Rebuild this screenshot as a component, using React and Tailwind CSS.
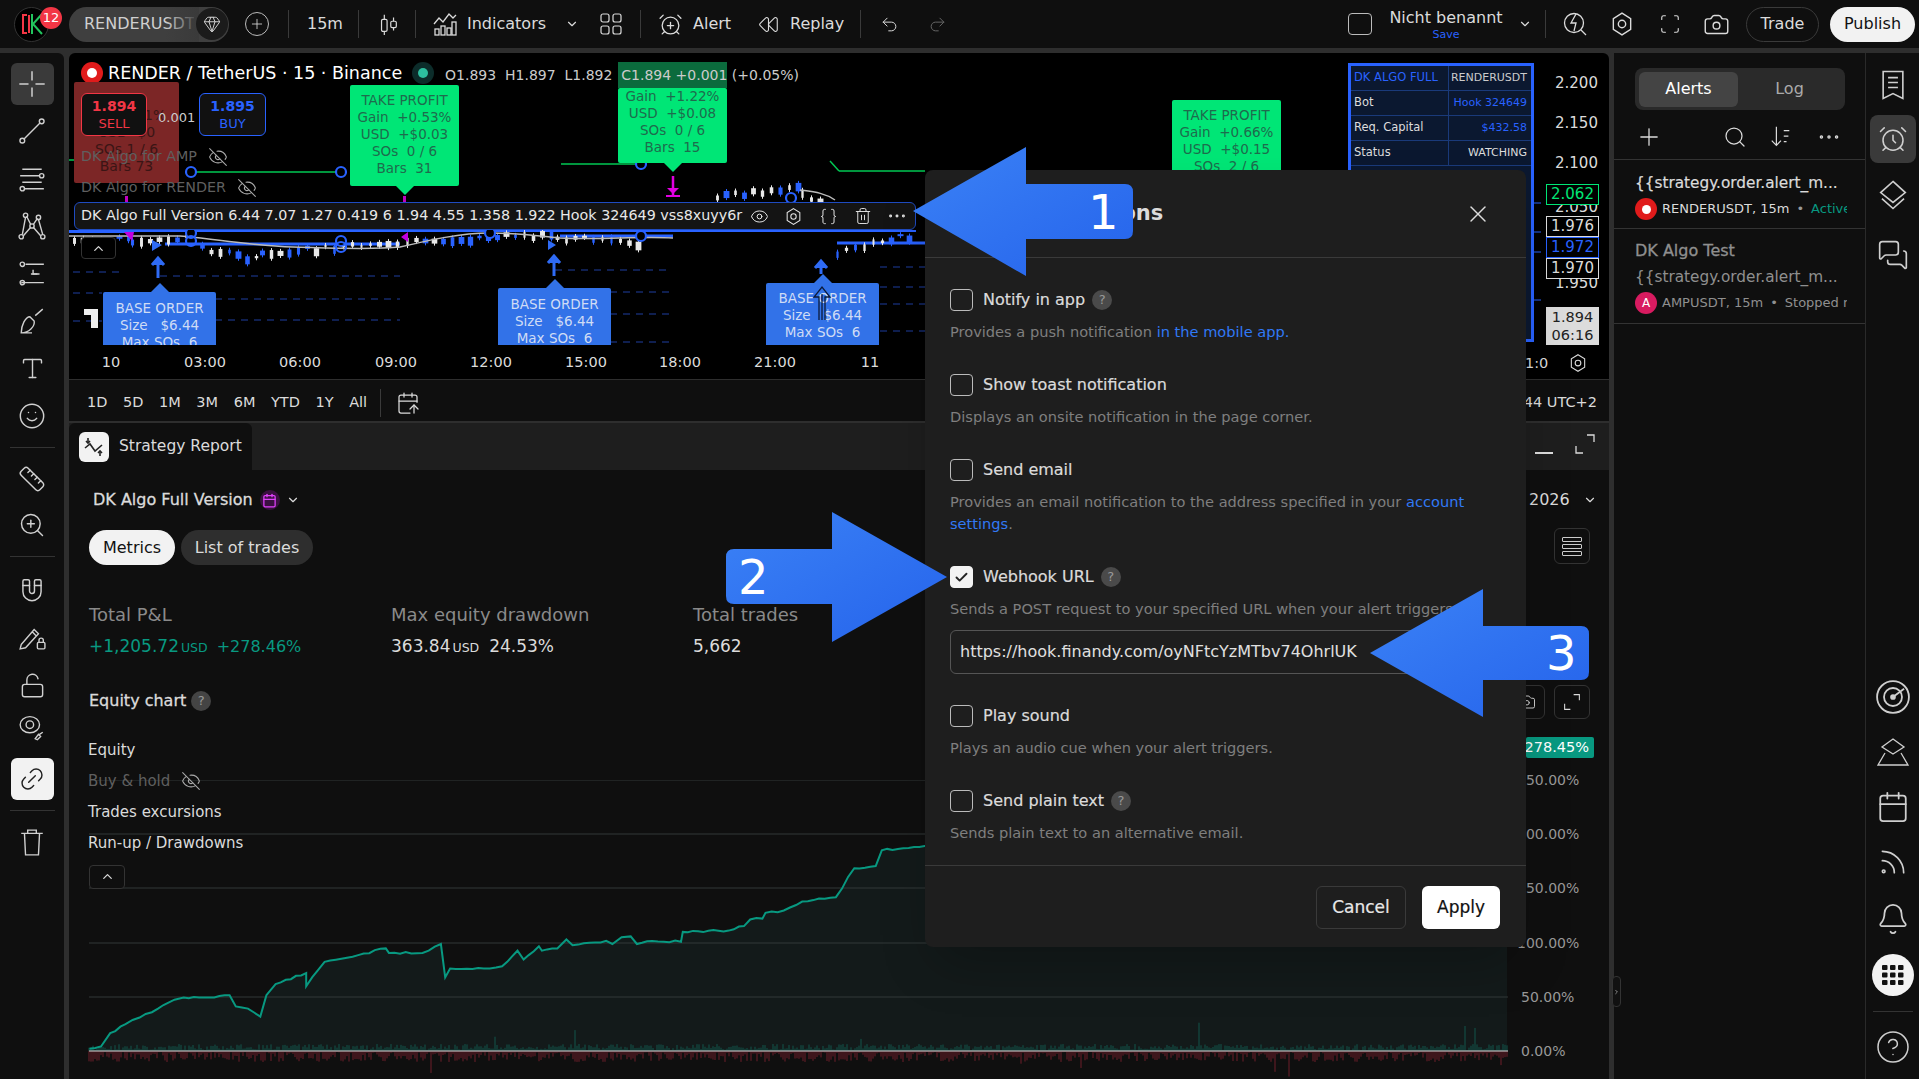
import React from "react";
import { Plus, ChevronDown, ChevronUp, ChevronRight, Undo2, Redo2, Camera, Search, X, Trash2, EyeOff, Magnet, Ruler, ZoomIn, Smile, Type, LockOpen, Bell, Rss, CircleHelp, AlarmClock, MessagesSquare, Ellipsis, Calendar, Check, Scan, Braces, Eye, Gem, CalendarArrowUp, Rewind, AlarmClockPlus, Link2 } from "lucide-react";

const S = 1.25;
const Sep = ({ ml = 0 }) => <div className="h-7 w-px bg-[#3a3a3a]" style={{ marginLeft: ml }} />;

const Ic = ({ size = 26, children, className = "", vb = 26 }) => (
  <svg width={size} height={size} viewBox={`0 0 ${vb} ${vb}`} fill="none" stroke="currentColor" strokeWidth="1.3" className={className}>{children}</svg>
);
const Hex = ({ size = 22, className = "" }) => (
  <svg width={size} height={size} viewBox="0 0 24 24" fill="none" stroke="currentColor" strokeWidth="1.3" className={className}>
    <path d="M12 2l8 5v10l-8 5-8-5V7z" /><circle cx="12" cy="12" r="3.4" />
  </svg>
);
const Corners = ({ size = 22, className = "" }) => (
  <svg width={size} height={size} viewBox="0 0 22 22" fill="none" stroke="currentColor" strokeWidth="1.3" className={className}><path d="M13 2h7v7M2 13v7h7" /></svg>
);

const Tool = ({ children, active, white }) => (
  <div className={`w-[43px] h-[42px] flex items-center justify-center rounded-md ${active ? "bg-[#3a3a3a]" : white ? "bg-[#f2f2f2] text-[#222]" : ""}`}>{children}</div>
);

function Logo() {
  return (
    <div className="relative w-[35px] h-[35px] rounded-full bg-black border border-[#333] flex items-center justify-center">
      <svg width="24" height="22" viewBox="0 0 24 22" fill="none" strokeWidth="2">
        <path d="M7 2H3v18h4" stroke="#f23645" />
        <path d="M9 2v18" stroke="#f23645" />
        <path d="M12 1v20M22 1L13 11l9 10" stroke="#22c55e" />
      </svg>
      <span className="absolute -right-[14px] -top-[1px] w-[22px] h-[22px] rounded-full bg-[#f23645] text-white text-[13px] flex items-center justify-center">12</span>
    </div>
  );
}

function TopBar() {
  return (
    <div className="h-12 bg-[#0f0f0f] flex items-center text-[#dbdbdb] shrink-0 text-[16px]">
      <div className="ml-[14px]"><Logo /></div>
      <div className="relative ml-[20px] w-[160px] h-[35px] rounded-full bg-[#3f3f3f] flex items-center justify-between overflow-hidden pl-[15px]">
        <span className="w-[110px] overflow-hidden whitespace-nowrap text-[16px] text-[#d0d0d0]">RENDERUSDT</span>
        <span className="absolute right-[30px] top-0 h-full w-[34px] bg-gradient-to-r from-transparent to-[#3a3a3a]" />
        <span className="relative w-[32px] h-[32px] rounded-full bg-[#1b1b1b] flex items-center justify-center mr-[1px]"><Gem size={18} strokeWidth={S} /></span>
      </div>
      <span className="ml-[16px] w-[24px] h-[24px] rounded-full border border-[#bbb] flex items-center justify-center"><Plus size={16} strokeWidth={S} /></span>
      <Sep ml={19} />
      <span className="ml-[18px] w-[33px]">15m</span>
      <Sep ml={18} />
      <Ic size={24} className="ml-[17px]"><path d="M9 3v22M19 6v14" /><rect x="6" y="8" width="6" height="13" rx="1.5" fill="#0f0f0f" /><rect x="16" y="10" width="6" height="7" rx="1.5" fill="#0f0f0f" /></Ic>
      <Sep ml={15} />
      <Ic size={26} className="ml-[16px]"><path d="M2 13l5-6 4 4 6-8 4 4 3-3" /><rect x="3" y="18" width="4" height="6" /><rect x="9" y="15" width="4" height="9" /><rect x="15" y="17" width="4" height="7" /><rect x="20" y="11" width="4" height="13" /></Ic>
      <span className="ml-[9px] w-[78px]">Indicators</span>
      <ChevronDown size={14} className="ml-[20px]" />
      <svg width="22" height="22" viewBox="0 0 22 22" fill="none" stroke="currentColor" strokeWidth="1.2" className="ml-[21px]"><rect x="1" y="1" width="8" height="8" rx="2"/><rect x="13" y="1" width="8" height="8" rx="2"/><rect x="1" y="13" width="8" height="8" rx="2"/><rect x="13" y="13" width="8" height="8" rx="2"/></svg>
      <Sep ml={18} />
      <span className="ml-[17px]"><AlarmClockPlus size={25} strokeWidth={S} /></span>
      <span className="ml-[10px] w-[40px]">Alert</span>
      <span className="ml-[25px]"><Rewind size={21} strokeWidth={S} /></span>
      <span className="ml-[11px] w-[52px]">Replay</span>
      <Sep ml={18} />
      <Undo2 size={19} strokeWidth={S} className="ml-[19px]" />
      <Redo2 size={19} strokeWidth={S} className="ml-[29px] text-[#666]" />
      <div className="flex-1" />
      <span className="w-[24px] h-[22px] rounded-[4px] border border-[#bbb]" />
      <div className="ml-[18px] w-[112px] flex flex-col items-center leading-none pt-[2px]">
        <span className="whitespace-nowrap">Nicht benannt</span>
        <span className="text-[11px] text-[#2962ff] mt-[3px]">Save</span>
      </div>
      <ChevronDown size={14} className="ml-[16px]" />
      <Sep ml={13} />
      <Ic size={26} className="ml-[16px]"><circle cx="12" cy="12" r="9.5" /><path d="M19 19l5 5" /><path d="M14 3l-5 9h5l-2 8" /></Ic>
      <Hex size={26} className="ml-[21px]" />
      <Scan size={22} strokeWidth={S} className="ml-[24px]" />
      <Camera size={27} strokeWidth={S} className="ml-[22px]" />
      <span className="ml-[16px] w-[73px] h-[35px] rounded-full border border-[#3a3a3a] flex items-center justify-center">Trade</span>
      <span className="ml-[11px] w-[85px] h-[35px] rounded-full bg-[#f2f2f2] text-[#111] flex items-center justify-center mr-[4px]">Publish</span>
    </div>
  );
}

function LeftBar() {
  const Div = () => <div className="w-[45px] h-px bg-[#333] my-[10px]" />;
  return (
    <div className="w-16 bg-[#0f0f0f] rounded-tr-md shrink-0 flex flex-col items-center pt-[10px] text-[#d0d0d0]">
      <Tool active><Ic size={30}><path d="M13 2v8M13 16v8M2 13h8M16 13h8" /></Ic></Tool>
      <div className="flex flex-col items-center mt-[5px] gap-[5.5px]">
        <Tool><Ic size={28}><circle cx="4" cy="22" r="2.2" /><circle cx="22" cy="4" r="2.2" /><path d="M5.6 20.4L20.4 5.6" /></Ic></Tool>
        <Tool><Ic size={28}><path d="M4 4h18M2 10h18M4 16h18M6 22h18" /><circle cx="22" cy="10" r="2" fill="#0f0f0f" /><circle cx="4" cy="22" r="2" fill="#0f0f0f" /></Ic></Tool>
        <Tool><Ic size={28}><circle cx="7" cy="3" r="2" /><circle cx="19" cy="5" r="2" /><circle cx="13" cy="13" r="2" /><circle cx="3" cy="23" r="2" /><circle cx="23" cy="23" r="2" /><path d="M7 5L4 21M19 7l4 14M8 4l4 8M18 6l-4 6M5 22l7-8M21 22l-7-8" /></Ic></Tool>
        <Tool><Ic size={28}><path d="M7 4h17M3 21h21M12 13h8" /><circle cx="4" cy="4" r="2" /><circle cx="4" cy="21" r="2" /><path d="M14 9v4h4" /></Ic></Tool>
        <Tool><Ic size={28}><path d="M3 24c0-7 4-15 8-15l4 4c1 5-5 11-12 11zM3 24h10M16 8l7-6" /></Ic></Tool>
        <Tool><Type size={27} strokeWidth={S} /></Tool>
        <Tool><Smile size={28} strokeWidth={S} /></Tool>
      </div>
      <Div />
      <Tool><Ruler size={28} strokeWidth={S} /></Tool>
      <div className="mt-[4px]"><Tool><ZoomIn size={28} strokeWidth={S} /></Tool></div>
      <Div />
      <Tool><Magnet size={28} strokeWidth={S} className="rotate-[135deg]" /></Tool>
      <div className="mt-[7px]"><Tool><Ic size={28}><path d="M3 20L15 6l4 4L7 23l-5 1zM13 8l4 4" /><rect x="18" y="18" width="7" height="6" rx="1" /><path d="M19.5 18v-2a2 2 0 0 1 4 0v2" /></Ic></Tool></div>
      <div className="mt-[6px]"><Tool><LockOpen size={27} strokeWidth={S} /></Tool></div>
      <div className="mt-[2px]"><Tool><Ic size={28}><ellipse cx="11" cy="9" rx="9" ry="7.5" /><circle cx="11" cy="9" r="3.5" /><path d="M16 22l3-4 2 2-3 3zM20 18l3-2" /></Ic></Tool></div>
      <div className="mt-[8px]"><Tool white><Link2 size={28} strokeWidth={S} className="-rotate-45" /></Tool></div>
      <Div />
      <Tool><Ic size={28}><path d="M3 5h20M9 5V2h8v3M6 5l1 20h12l1-20" /></Ic></Tool>
    </div>
  );
}

const candles = (() => {
  const out = [];
  let seed = 7;
  const r = () => { seed = (seed * 9301 + 49297) % 233280; return seed / 233280; };
  const add = (x0, x1, y0, y1) => {
    for (let x = x0; x < x1; x += 9) {
      const t = (x - x0) / (x1 - x0);
      const y = y0 + (y1 - y0) * t + r() * 5 - 2.5;
      const h = 2 + r() * 7;
      out.push({ x, y, h, blue: r() > 0.5, w: 2 + r() * 4 });
    }
  };
  add(72, 130, 238, 238); add(130, 190, 240, 236); add(200, 255, 246, 256); add(260, 400, 252, 240); add(405, 550, 240, 232);
  add(555, 640, 235, 240); add(715, 800, 194, 183); add(800, 825, 190, 205); add(835, 915, 250, 232);
  return out;
})();

function ChartSvg() {
  const dash = [[73, 121, 272], [73, 102, 293], [73, 102, 321], [160, 400, 276], [215, 400, 299], [215, 400, 320], [555, 670, 270], [610, 670, 292], [610, 670, 314], [610, 670, 342], [880, 925, 267], [880, 925, 287], [880, 925, 304], [880, 925, 331]];
  return (
    <svg className="absolute inset-0" width="1540" height="326" viewBox="69 53 1540 326">
      {[[69, 76, 160], [190, 343, 172], [561, 637, 164], [839, 925, 171]].map(([a, b, y], i) => <line key={i} x1={a} x2={b} y1={y} y2={y} stroke="#00c853" strokeWidth="1.5" />)}
      <polyline points="830,161 839,171" stroke="#00c853" strokeWidth="1.5" fill="none" />
      {dash.map(([a, b, y], i) => <line key={i} x1={a} x2={b} y1={y} y2={y} stroke="#1f3f9f" strokeWidth="1.2" strokeDasharray="7 6" />)}
      {[[69, 232, 130, 232, 2], [165, 244, 400, 244, 3], [560, 236, 673, 236, 3], [837, 243, 925, 243, 3], [69, 231, 916, 231, 2]].map(([a, y, b, y2, w], i) => <line key={i} x1={a} x2={b} y1={y} y2={y2} stroke="#2962ff" strokeWidth={w} />)}
      {candles.map((c, i) => (
        <g key={i} fill={c.blue ? "#2962ff" : "#e8e8e8"}>
          <rect x={c.x + 2} y={c.y - 2} width="1" height={c.h + 4} />
          <rect x={c.x + (5 - c.w) / 2} y={c.y} width={c.w} height={c.h} />
        </g>
      ))}
      <path d="M69 236 H180 C210 238 250 246 293 247 C330 248 370 250 400 247 C430 240 460 233 490 233 C520 233 540 236 560 238 C600 240 640 236 673 238 M800 190 C815 192 825 193 835 200" stroke="#bbb" strokeWidth="1.5" fill="none" />
      {[[191, 172], [341, 172], [191, 233], [191, 241], [341, 241], [341, 247], [490, 233], [641, 164], [641, 236], [791, 198], [1580, 195], [1580, 265]].map(([x, y], i) => <circle key={i} cx={x} cy={y} r="5" fill={i === 3 || i === 5 ? "none" : "#000"} stroke="#2962ff" strokeWidth="2.2" />)}
      <line x1="673" x2="673" y1="176" y2="195" stroke="#e000e0" strokeWidth="2.5" />
      <path d="M667 188h12l-6 6z" fill="#e000e0" /><rect x="666" y="195" width="14" height="2" fill="#e000e0" />
      <rect x="125" y="196" width="3" height="6" fill="#c000c0" /><rect x="403" y="196" width="3" height="6" fill="#c000c0" />
      <path d="M124 232h10l-2 9z M408 232v10l-7-5z" fill="#c000e0" />
      <path d="M152 240l10 5-10 6z M548 240l8 5-8 5z" fill="#2f6bf5" />
      {[[158, 316, 258], [554, 314, 256], [821, 312, 261]].map(([x, y1, y2], i) => (
        <g key={i} stroke="#2f6bf5" strokeWidth="3" fill="none"><line x1={x} x2={x} y1={y1 - 38} y2={y2} /><path d={`M${x - 6} ${y2 + 7}l6 -7 6 7`} fill="#2f6bf5" /></g>
      ))}
      <path d="M84 309h14v19h-7v-13h-7z" fill="#eee" />
      {[[1543, 203], [1543, 232], [1543, 252], [1543, 300]].map(([x, y], i) => <line key={i} x1={x - 9} x2={x - 2} y1={y} y2={y} stroke="#2962ff" />)}
    </svg>
  );
}

const Tp = ({ cls, ptr = true, lines }) => (
  <div className={`absolute w-[109px] bg-[#00e676] rounded-[2px] text-[#1f6b4d] text-[13.5px] leading-[17px] text-center pt-[7px] ${cls}`}>
    {lines.map((l, i) => <div key={i} className="whitespace-pre">{l}</div>)}
    {ptr && <div className="absolute left-1/2 -translate-x-1/2 -bottom-[9px] w-0 h-0 border-x-[9px] border-x-transparent border-t-[9px] border-t-[#00e676]" />}
  </div>
);
const Bo = ({ cls }) => (
  <div className={`absolute w-[113px] bg-[#3272e8] rounded-t-[2px] text-[#cfdcf5] text-[13.5px] leading-[17px] text-center ${cls}`}>
    <div className="absolute left-1/2 -translate-x-1/2 -top-[9px] w-0 h-0 border-x-[9px] border-x-transparent border-b-[9px] border-b-[#3272e8]" />
    <div className="h-full overflow-hidden">
      <div>BASE ORDER</div><div className="whitespace-pre">{`Size   $6.44`}</div><div className="whitespace-pre">{`Max SOs  6`}</div>
    </div>
  </div>
);

function Chart() {
  const time = [["10", 111], ["03:00", 205], ["06:00", 300], ["09:00", 396], ["12:00", 491], ["15:00", 586], ["18:00", 680], ["21:00", 775], ["11", 870]];
  const tr = [["DK ALGO  FULL", "RENDERUSDT", "#2962ff", "#ccc"], ["Bot", "Hook 324649", "#ddd", "#2962ff"], ["Req. Capital", "$432.58", "#ddd", "#2962ff"], ["Status", "WATCHING", "#ddd", "#ddd"]];
  const tag = "absolute left-[1477px] w-[53px] h-[21px] flex items-center justify-center text-[15px] border bg-black";
  return (
    <div className="relative h-[326px] bg-black rounded-t-md overflow-hidden text-[#dbdbdb] shrink-0">
      <ChartSvg />
      <div className="absolute left-[12px] top-[7px] flex items-center h-[26px] whitespace-nowrap">
        <span className="w-[22px] h-[22px] rounded-full bg-[#e01b1b] flex items-center justify-center"><span className="w-[10px] h-[10px] rounded-full bg-white" /></span>
        <span className="ml-[5px] text-[17.5px] text-white">RENDER / TetherUS · 15 · Binance</span>
        <span className="ml-[10px] w-[22px] h-[22px] rounded-full bg-[#0c2c2a] flex items-center justify-center"><span className="w-[10px] h-[10px] rounded-full bg-[#2dbf9f]" /></span>
      </div>
      <div className="absolute left-[549px] top-[9px] w-[109px] h-[26px] bg-[#0b6b3d]" />
      <div className="absolute left-[376px] top-[12px] text-[14px] whitespace-pre text-[#ccc] z-10">O1.893  H1.897  L1.892  C1.894 +0.001 (+0.05%)</div>
      <div className="absolute left-[5px] top-[29px] w-[105px] h-[101px] bg-[#7c2626] text-[#3a1515] text-[14px] leading-[17px] text-center pt-[8px] rounded-[2px]">
        <div>EXIT</div><div>Loss 0.01%</div><div>USD  -$0</div><div>SOs  1 / 6</div><div>Bars  73</div>
      </div>
      <div className="absolute left-[12px] top-[40px] w-[66px] h-[43px] bg-[#111] border border-[#f23645] rounded-md text-[#f23645] flex flex-col items-center justify-center leading-[18px]"><span className="text-[14px] font-bold">1.894</span><span className="text-[13px]">SELL</span></div>
      <div className="absolute left-[130px] top-[40px] w-[67px] h-[43px] bg-[#111] border border-[#2962ff] rounded-md text-[#2962ff] flex flex-col items-center justify-center leading-[18px]"><span className="text-[14px] font-bold">1.895</span><span className="text-[13px]">BUY</span></div>
      <span className="absolute left-[89px] top-[55px] text-[13px] text-[#ccc]">0.001</span>
      <div className="absolute left-[12px] top-[93px] flex items-center gap-[11px] text-[14.3px] text-[#5f5f5f]">DK Algo for AMP <EyeOff size={20} strokeWidth={S} className="text-[#aaa]" /></div>
      <div className="absolute left-[12px] top-[124px] flex items-center gap-[11px] text-[14.3px] text-[#5f5f5f]">DK Algo for RENDER <EyeOff size={20} strokeWidth={S} className="text-[#aaa]" /></div>

      <Tp cls="left-[281px] top-[32px] h-[101px]" lines={["TAKE PROFIT", "Gain  +0.53%", "USD  +$0.03", "SOs  0 / 6", "Bars  31"]} />
      <Tp cls="left-[549px] top-[35px] h-[75px] !pt-0" lines={["Gain  +1.22%", "USD  +$0.08", "SOs  0 / 6", "Bars  15"]} />
      <Tp cls="left-[1103px] top-[47px] h-[80px]" ptr={false} lines={["TAKE PROFIT", "Gain  +0.66%", "USD  +$0.15", "SOs  2 / 6"]} />

      <div className="absolute left-[5px] top-[149px] w-[842px] h-[28px] bg-[#141414] border border-[#1f4bc0] rounded-md flex items-center pl-[6px] text-[14.3px] text-[#e8e8e8] whitespace-nowrap">
        <span className="w-[660px]">DK Algo Full Version 6.44 7.07 1.27 0.419 6 1.94 4.55 1.358 1.922 Hook 324649 vss8xuyy6r</span>
        <Eye size={19} strokeWidth={S} className="ml-[9px]" />
        <Hex size={19} className="ml-[15px]" />
        <Braces size={19} strokeWidth={S} className="ml-[16px]" />
        <Trash2 size={18} strokeWidth={S} className="ml-[16px]" />
        <Ellipsis size={22} strokeWidth={S} className="ml-[14px]" />
      </div>
      <div className="absolute left-[12px] top-[184px] w-[35px] h-[22px] bg-black border border-[#333] rounded flex items-center justify-center"><ChevronUp size={15} /></div>

      <Bo cls="left-[34px] top-[239px] h-[53px] pt-[8px]" />
      <Bo cls="left-[429px] top-[235px] h-[57px] pt-[8px]" />
      <Bo cls="left-[697px] top-[230px] h-[62px] pt-[7px]" />
      <svg className="absolute left-[743px] top-[232px]" width="20" height="36" viewBox="0 0 20 36" fill="none" stroke="#0b1a3a" strokeWidth="1.3"><path d="M10 35V9M7 35V12H2L10 2l8 10h-5v23" /></svg>

      <div className="absolute left-[1279px] top-[10px] w-[186px] h-[279px] border-[3px] border-[#2962ff] bg-[#0b1830]">
        {tr.map(([a, b, ca, cb], i) => (
          <div key={i} className="grid grid-cols-[98px_1fr] h-[25px] border-b border-[#1a3a7a] items-center">
            <span className="pl-[3px] h-full flex items-center border-r border-[#1a3a7a] whitespace-nowrap text-[11.5px]" style={{ color: ca }}>{a}</span>
            <span className="pr-[4px] text-right whitespace-nowrap text-[11px]" style={{ color: cb }}>{b}</span>
          </div>
        ))}
      </div>
      {[["2.200", 20], ["2.150", 60], ["2.100", 100], ["2.050", 144], ["1.950", 220]].map(([t, y]) => <span key={t} className="absolute left-[1486px] text-[15px] leading-[20px]" style={{ top: y }}>{t}</span>)}
      <span className={`${tag} top-[131px] border-[#00e676] text-[#00e676]`}>2.062</span>
      <span className={`${tag} top-[163px] border-[#ddd]`}>1.976</span>
      <span className={`${tag} top-[184px] border-[#2962ff] text-[#2962ff]`}>1.972</span>
      <span className={`${tag} top-[205px] border-[#ddd]`}>1.970</span>
      <span className="absolute left-[1477px] top-[254px] w-[53px] h-[38px] bg-[#dcdcdc] text-[#222] text-[14.5px] leading-[18px] flex flex-col items-center justify-center"><span>1.894</span><span>06:16</span></span>
      <span className="absolute left-[1456px] top-[300px] text-[14.5px]">1:0</span>
      <Hex size={20} className="absolute left-[1499px] top-[300px]" />
      {time.map(([t, x]) => <span key={t} className="absolute top-[299px] text-[14.5px] -translate-x-1/2" style={{ left: x - 69 }}>{t}</span>)}
    </div>
  );
}

function RangeRow() {
  return (
    <div className="h-[42px] bg-[#0f0f0f] border-t border-[#2e2e2e] flex items-center text-[14.5px] text-[#dbdbdb] pl-[18px] pt-[5px] shrink-0 relative">
      {["1D", "5D", "1M", "3M", "6M", "YTD", "1Y", "All"].map((t, i) => <span key={t} className={i ? "ml-[15.6px]" : ""}>{t}</span>)}
      <Sep ml={13} />
      <CalendarArrowUp size={24} strokeWidth={S} className="ml-[15px]" />
      <span className="absolute right-[12px] text-[14.5px]">44 UTC+2</span>
    </div>
  );
}

const pts = (() => {
  const base = [[146,1500],[165,1495],[180,1465],[205,1445],[228,1430],[258,1410],[285,1390],[300,1385],[325,1385],[375,1380],[385,1405],[405,1410],[425,1428],[435,1380],[450,1355],[500,1330],[500,1360],[530,1305],[585,1290],[630,1275],[635,1285],[690,1285],[720,1265],[727,1340],[735,1320],[790,1320],[820,1315],[845,1280],[855,1300],[880,1270],[885,1280],[910,1275],[925,1255],[935,1268],[990,1258],[1000,1265],[1015,1250],[1030,1248],[1040,1265],[1065,1258],[1112,1260],[1115,1238],[1190,1235],[1215,1225],[1225,1210],[1245,1208],[1250,1195],[1280,1190],[1310,1170],[1365,1160],[1395,1095],[1430,1090],[1440,1055],[1510,1045]];
  const out = [];
  let seed = 11;
  const r = () => { seed = (seed * 9301 + 49297) % 233280; return seed / 233280; };
  base.forEach(([x, y], i) => {
    if (i) {
      const [px, py] = base[i - 1];
      const n = Math.floor(Math.abs(x - px) / 8);
      for (let k = 1; k < n; k++) {
        const t = k / n;
        out.push([px + (x - px) * t, py + (y - py) * t + (r() - 0.5) * 5]);
      }
    }
    out.push([x, y]);
  });
  const res = out.map(([x, y]) => [x / 1.633, 380 + y / 2.243]);
  res.push([1507, 755]);
  return res;
})();

function Equity() {
  const line = pts.map((p) => p.map((v) => v.toFixed(1)).join(",")).join(" ");
  const bars = [];
  let seed = 3;
  const r = () => { seed = (seed * 9301 + 49297) % 233280; return seed / 233280; };
  for (let x = 89; x < 1508; x += 2) {
    const sR = r() > 0.98 ? 26 : 10;
    const sG = r() > 0.99 ? 30 : 6;
    bars.push(<line key={x} x1={x} x2={x} y1="1051" y2={1052 + r() * sR} stroke="#6e1f2b" strokeWidth="1" />);
    bars.push(<line key={"g" + x} x1={x} x2={x} y1="1051" y2={1050 - r() * sG} stroke="#12554a" strokeWidth="1" />);
  }
  return (
    <svg className="absolute left-0 top-[357px]" width="1540" height="299" viewBox="69 780 1540 299">
      <polygon points={`${line} 1507,1051 89,1051`} fill="#131a1a" />
      {[780, 834, 888, 943, 997].map((y) => <line key={y} x1="89" x2="1508" y1={y} y2={y} stroke="#333838" />)}
      {bars}
      <line x1="89" x2="1508" y1="1051" y2="1051" stroke="#d8d8d8" />
      <polyline points={line} fill="none" stroke="#089981" strokeWidth="2" />
    </svg>
  );
}

function Report() {
  const axis = [["250.00%", 780, 1448], ["200.00%", 834, 1448], ["150.00%", 888, 1448], ["100.00%", 943, 1448], ["50.00%", 997, 1452], ["0.00%", 1051, 1452]];
  const bold = "[-webkit-text-stroke:0.3px_currentColor]";
  return (
    <div className="relative flex-1 bg-[#0f0f0f] text-[#dbdbdb] mt-[2px] overflow-hidden">
      <div className="h-[47px] bg-[#1e1e1e] flex items-stretch justify-between">
        <div className="w-[183px] bg-[#0f0f0f] rounded-t-md flex items-center pl-[10px] gap-[10px] text-[15.5px]">
          <span className="w-[30px] h-[30px] bg-[#f2f2f2] rounded-md flex items-center justify-center text-[#222]">
            <svg width="20" height="24" viewBox="0 0 20 24" fill="none" stroke="currentColor" strokeWidth="1.6"><path d="M4 3v4M16 17v4M1 13l5-4 5 7 7-6" /><path d="M2 6l2 2 2-2M14 18l2-2 2 2" /></svg>
          </span>
          Strategy Report
        </div>
        <div className="flex items-center gap-[21px] pr-[13px]"><span className="w-[18px] h-[1.5px] bg-[#ddd] mt-[13px]" /><Corners size={22} className="-mt-[6px]" /></div>
      </div>
      <div className={`flex items-center pl-[24px] pt-[18px] text-[16px] leading-[24px] ${bold}`}>DK Algo Full Version
        <span className="ml-[7px] w-[20px] h-[20px] rounded-full bg-[#3a1040] flex items-center justify-center"><Calendar size={15} className="text-[#e040fb]" /></span>
        <ChevronDown size={14} className="ml-[6px]" />
      </div>
      <div className="flex pl-[20px] mt-[18px] gap-[6px] text-[16px]">
        <span className="w-[86px] h-[35px] bg-[#f2f2f2] text-[#111] rounded-full flex items-center justify-center">Metrics</span>
        <span className="w-[132px] h-[35px] bg-[#2e2e2e] rounded-full flex items-center justify-center">List of trades</span>
      </div>
      <div className="grid grid-cols-[302px_302px_200px] pl-[20px] mt-[37px]">
        <div><div className="text-[18px] text-[#8a8a8a] leading-[26px]">Total P&amp;L</div><div className="mt-[6px] text-[17px] text-[#089981] whitespace-nowrap">+1,205.72<span className="text-[12.5px] ml-[2px]">USD</span><span className="ml-[9px] text-[16px]">+278.46%</span></div></div>
        <div><div className="text-[18px] text-[#8a8a8a] leading-[26px]">Max equity drawdown</div><div className="mt-[6px] text-[17px] whitespace-nowrap">363.84<span className="text-[12.5px] ml-[2px]">USD</span><span className="ml-[10px]">24.53%</span></div></div>
        <div><div className="text-[18px] text-[#8a8a8a] leading-[26px]">Total trades</div><div className="mt-[6px] text-[17px]">5,662</div></div>
      </div>
      <div className={`flex items-center pl-[20px] mt-[29px] text-[16px] leading-[24px] gap-[5px] ${bold}`}>Equity chart <span className="w-[20px] h-[20px] rounded-full bg-[#444] text-[#999] text-[13px] flex items-center justify-center [-webkit-text-stroke:0]">?</span></div>
      <Equity />
      <div className="relative flex flex-col pl-[19px] mt-[27px] text-[15px] leading-[20px] gap-[11px]">
        <span>Equity</span>
        <span className="flex items-center gap-[11px] text-[#5f5f5f]"><span>Buy &amp; hold</span><EyeOff size={20} strokeWidth={S} className="text-[#aaa]" /></span>
        <span>Trades excursions</span>
        <span>Run-up / Drawdowns</span>
        <span className="w-[36px] h-[24px] border border-[#333] rounded flex items-center justify-center bg-[#0f0f0f] mt-[1px] ml-[1px]"><ChevronUp size={15} /></span>
      </div>
      <span className="absolute left-[1460px] top-[65px] flex items-center gap-[13px] text-[16px]">2026 <ChevronDown size={14} /></span>
      <span className="absolute left-[1485px] top-[105px] w-[36px] h-[36px] border border-[#333] rounded-md flex flex-col items-center justify-center gap-[2px]">{[0, 1, 2].map((i) => <span key={i} className="w-[20px] h-[5px] border border-[#ccc] rounded-[1px]" />)}</span>
      <span className="absolute left-[1440px] top-[262px] w-[36px] h-[34px] border border-[#333] rounded-md flex items-center justify-center"><Camera size={18} strokeWidth={S} /></span>
      <span className="absolute left-[1485px] top-[262px] w-[36px] h-[34px] border border-[#333] rounded-md flex items-center justify-center"><Corners size={18} /></span>
      <span className="absolute left-[1457px] top-[314px] w-[68px] h-[21px] bg-[#089981] rounded-[2px] text-white text-[14.5px] flex items-center justify-end pr-[5px]">278.45%</span>
      {axis.map(([t, y, x]) => <span key={t} className="absolute text-[14px] leading-[20px] text-[#999]" style={{ top: y - 423 - 10, left: x }}>{t}</span>)}
    </div>
  );
}

function RightPanel() {
  return (
    <div className="w-[252px] bg-[#0f0f0f] shrink-0 text-[#dbdbdb] border-r border-[#2a2a2a] relative">
      <div className="h-[107px] border-b border-[#333] px-[21px] pt-[15px]">
        <div className="w-[210px] h-[42px] rounded-lg bg-[#2a2a2a] flex items-center px-[4px] text-[16px]">
          <span className="w-[99px] h-[35px] bg-[#444] rounded-md flex items-center justify-center text-white">Alerts</span>
          <span className="flex-1 text-center text-[#aaa]">Log</span>
        </div>
        <div className="flex items-center mt-[13px]">
          <Plus size={28} strokeWidth={1.1} />
          <Search size={24} strokeWidth={S} className="ml-[60px]" />
          <Ic size={24} className="ml-[22px]"><path d="M8 2v20M3 17l5 5 5-5M16 6h6M16 12h5M16 18h3" /></Ic>
          <Ellipsis size={26} strokeWidth={S} className="ml-[23px]" />
        </div>
      </div>
      <div className="h-[69px] border-b border-[#333] pl-[21px] pt-[11px] overflow-hidden">
        <div className="text-[15.3px] leading-[24px] whitespace-nowrap [-webkit-text-stroke:0.2px_currentColor]">{"{{strategy.order.alert_m..."}</div>
        <div className="flex items-center h-[24px] mt-[2px] text-[13px] whitespace-nowrap w-[212px] overflow-hidden">
          <span className="w-[22px] h-[22px] shrink-0 rounded-full bg-[#e01b1b] flex items-center justify-center"><span className="w-[9px] h-[9px] rounded-full bg-white" /></span>
          <span className="ml-[5px]">RENDERUSDT, 15m</span><span className="mx-[7px] text-[#999]">•</span><span className="text-[#089981]">Active</span>
        </div>
      </div>
      <div className="h-[95px] border-b border-[#333] pl-[21px] pt-[10px] overflow-hidden text-[#8f8f8f]">
        <div className="text-[16px] leading-[24px] [-webkit-text-stroke:0.3px_currentColor]">DK Algo Test</div>
        <div className="text-[15.3px] leading-[24px] mt-[2px] whitespace-nowrap">{"{{strategy.order.alert_m..."}</div>
        <div className="flex items-center h-[24px] mt-[2px] text-[13px] whitespace-nowrap w-[212px] overflow-hidden">
          <span className="w-[22px] h-[22px] shrink-0 rounded-full bg-[#d81b60] flex items-center justify-center text-white text-[12px]">A</span>
          <span className="ml-[5px]">AMPUSDT, 15m</span><span className="mx-[7px]">•</span><span>Stopped manually</span>
        </div>
      </div>
      <div className="absolute -left-[2px] top-[923px] w-[9px] h-[31px] border border-[#333] rounded bg-[#111] flex items-center justify-center z-10"><ChevronRight size={10} /></div>
    </div>
  );
}

function RightBar() {
  return (
    <div className="flex-1 bg-[#0f0f0f] text-[#cfcfcf] flex flex-col items-center pt-[10px] relative">
      <div className="h-[44px] flex items-center"><Ic size={32}><path d="M5 2h16v22l-8-4-8 4zM9 7h8M9 11h8M9 15h8" /></Ic></div>
      <div className="mt-[8px] w-[46px] h-[48px] bg-[#3a3a3a] rounded-lg flex items-center justify-center"><AlarmClock size={30} strokeWidth={S} /></div>
      <div className="mt-[10px] h-[44px] flex items-center"><Ic size={32}><path d="M13 2l10 9-10 8-10-8zM4 16l9 8 9-8" /></Ic></div>
      <div className="mt-[16px] h-[44px] flex items-center"><MessagesSquare size={32} strokeWidth={S} /></div>
      <div className="mt-auto flex flex-col items-center pb-[10px]">
        <div className="h-[44px] flex items-center"><Ic size={36}><circle cx="13" cy="13" r="11.5" /><circle cx="13" cy="13" r="6.5" /><circle cx="13" cy="13" r="1.4" fill="currentColor" /><path d="M13 13l8-6" /></Ic></div>
        <div className="h-[44px] mt-[11px] flex items-center"><svg width="34" height="28" viewBox="0 0 34 28" fill="none" stroke="currentColor" strokeWidth="1.3"><path d="M17 1l11 8-11 7-11-7z"/><path d="M9 15l-7 12h30l-7-12"/></svg></div>
        <div className="h-[44px] mt-[11px] flex items-center"><Calendar size={34} strokeWidth={S} /></div>
        <div className="h-[44px] mt-[11px] flex items-center"><Rss size={32} strokeWidth={S} /></div>
        <div className="h-[44px] mt-[13px] flex items-center"><Bell size={34} strokeWidth={S} /></div>
        <div className="w-[42px] h-[42px] mt-[13px] rounded-full bg-[#f2f2f2] text-[#111] flex items-center justify-center"><svg width="22" height="20" viewBox="0 0 22 20" fill="currentColor">{[0, 7.5, 15].map((y) => [0, 8, 16].map((x) => <rect key={x + "-" + y} x={x} y={y} width="5.5" height="5" rx="1" />))}</svg></div>
        <div className="w-[40px] h-px bg-[#333] mt-[15px]" />
        <div className="h-[44px] mt-[13px] flex items-center"><CircleHelp size={36} strokeWidth={1} /></div>
      </div>
    </div>
  );
}

const Q = () => <span className="w-[20px] h-[20px] rounded-full bg-[#4a4a4a] text-[#999] text-[13px] flex items-center justify-center ml-[7px] [-webkit-text-stroke:0]">?</span>;

function Option({ label, q, checked, children, cls = "mt-[30px]" }) {
  return (
    <div className={cls}>
      <div className="flex items-center h-[24px]">
        <span className={`w-[23px] h-[22px] rounded-[4px] border flex items-center justify-center ${checked ? "bg-[#f2f2f2] border-[#f2f2f2] text-[#222]" : "border-[#bbb]"}`}>{checked && <Check size={15} strokeWidth={3} />}</span>
        <span className="ml-[10px] text-[16px] text-[#dbdbdb] [-webkit-text-stroke:0.2px_currentColor]">{label}</span>
        {q && <Q />}
      </div>
      <div className="mt-[9px] text-[14.6px] leading-[22px] text-[#7f7f7f]">{children}</div>
    </div>
  );
}

const A = ({ children }) => <span className="text-[#3179f5]">{children}</span>;

function Modal() {
  return (
    <div className="absolute left-[925px] top-[170px] w-[601px] h-[777px] bg-[#1e1e1e] rounded-lg shadow-2xl z-20 flex flex-col">
      <div className="h-[88px] border-b border-[#3a3a3a] flex items-center justify-between pl-[25px] pr-[34px] shrink-0">
        <span className="text-[21px] font-bold text-[#dbdbdb] pt-[1px]">Alert notifications</span>
        <X size={28} strokeWidth={1.2} className="text-[#ddd]" />
      </div>
      <div className="px-[25px] pt-[30px] flex-1">
        <Option label="Notify in app" q cls="">Provides a push notification <A>in the mobile app.</A></Option>
        <Option label="Show toast notification">Displays an onsite notification in the page corner.</Option>
        <Option label="Send email">Provides an email notification to the address specified in your <A>account settings</A>.</Option>
        <Option label="Webhook URL" q checked>
          Sends a POST request to your specified URL when your alert triggers.
          <div className="mt-[10px] h-[44px] rounded-md border border-[#555] flex items-center pl-[9px] text-[16px] text-[#e0e0e0] whitespace-nowrap">https://hook.finandy.com/oyNFtcYzMTbv74OhrlUK</div>
        </Option>
        <Option label="Play sound">Plays an audio cue when your alert triggers.</Option>
        <Option label="Send plain text" q>Sends plain text to an alternative email.</Option>
      </div>
      <div className="h-[82px] border-t border-[#3a3a3a] flex items-start justify-end gap-[16px] pr-[26px] pt-[20px] shrink-0 text-[17px] [-webkit-text-stroke:0.2px_currentColor]">
        <span className="w-[90px] h-[43px] border border-[#3a3a3a] rounded-md flex items-center justify-center text-[#e8e8e8]">Cancel</span>
        <span className="w-[78px] h-[43px] bg-white text-[#111] rounded-md flex items-center justify-center">Apply</span>
      </div>
    </div>
  );
}

const ArrowShape = ({ d, box, id }) => (
  <svg className="absolute z-30" style={{ left: box[0], top: box[1] }} width={box[2]} height={box[3]} viewBox={`${box[0]} ${box[1]} ${box[2]} ${box[3]}`}>
    <defs><linearGradient id={id} x1="0" y1="0" x2="1" y2="1"><stop offset="0" stopColor="#3b82f6" /><stop offset="1" stopColor="#2563eb" /></linearGradient></defs>
    <path d={d} fill={`url(#${id})`} />
  </svg>
);

export default function App() {
  return (
    <div className="relative w-[1919px] h-[1079px] bg-[#2e2e2e] overflow-hidden flex flex-col" style={{ fontFamily: '"DejaVu Sans", sans-serif' }}>
      <TopBar />
      <div className="flex-1 flex mt-[5px] min-h-0">
        <LeftBar />
        <div className="ml-[5px] w-[1540px] flex flex-col min-h-0">
          <Chart />
          <RangeRow />
          <Report />
        </div>
        <div className="w-[5px]" />
        <RightPanel />
        <RightBar />
      </div>
      <Modal />
      <ArrowShape id="a1" box={[910, 145, 226, 135]} d="M913 211 L1026 147 V184 H1125 Q1133 184 1133 192 V231 Q1133 239 1125 239 H1026 V276 Z" />
      <ArrowShape id="a2" box={[724, 510, 226, 135]} d="M947 577 L832 512 V549 H734 Q726 549 726 557 V596 Q726 604 734 604 H832 V642 Z" />
      <ArrowShape id="a3" box={[1368, 587, 224, 133]} d="M1370 653 L1483 589 V626 H1581 Q1589 626 1589 634 V672 Q1589 680 1581 680 H1483 V717 Z" />
      <span className="absolute z-40 left-[1088px] top-[184px] text-[48px] leading-[56px] text-white">1</span>
      <span className="absolute z-40 left-[738px] top-[549px] text-[48px] leading-[56px] text-white">2</span>
      <span className="absolute z-40 left-[1546px] top-[625px] text-[48px] leading-[56px] text-white">3</span>
    </div>
  );
}
